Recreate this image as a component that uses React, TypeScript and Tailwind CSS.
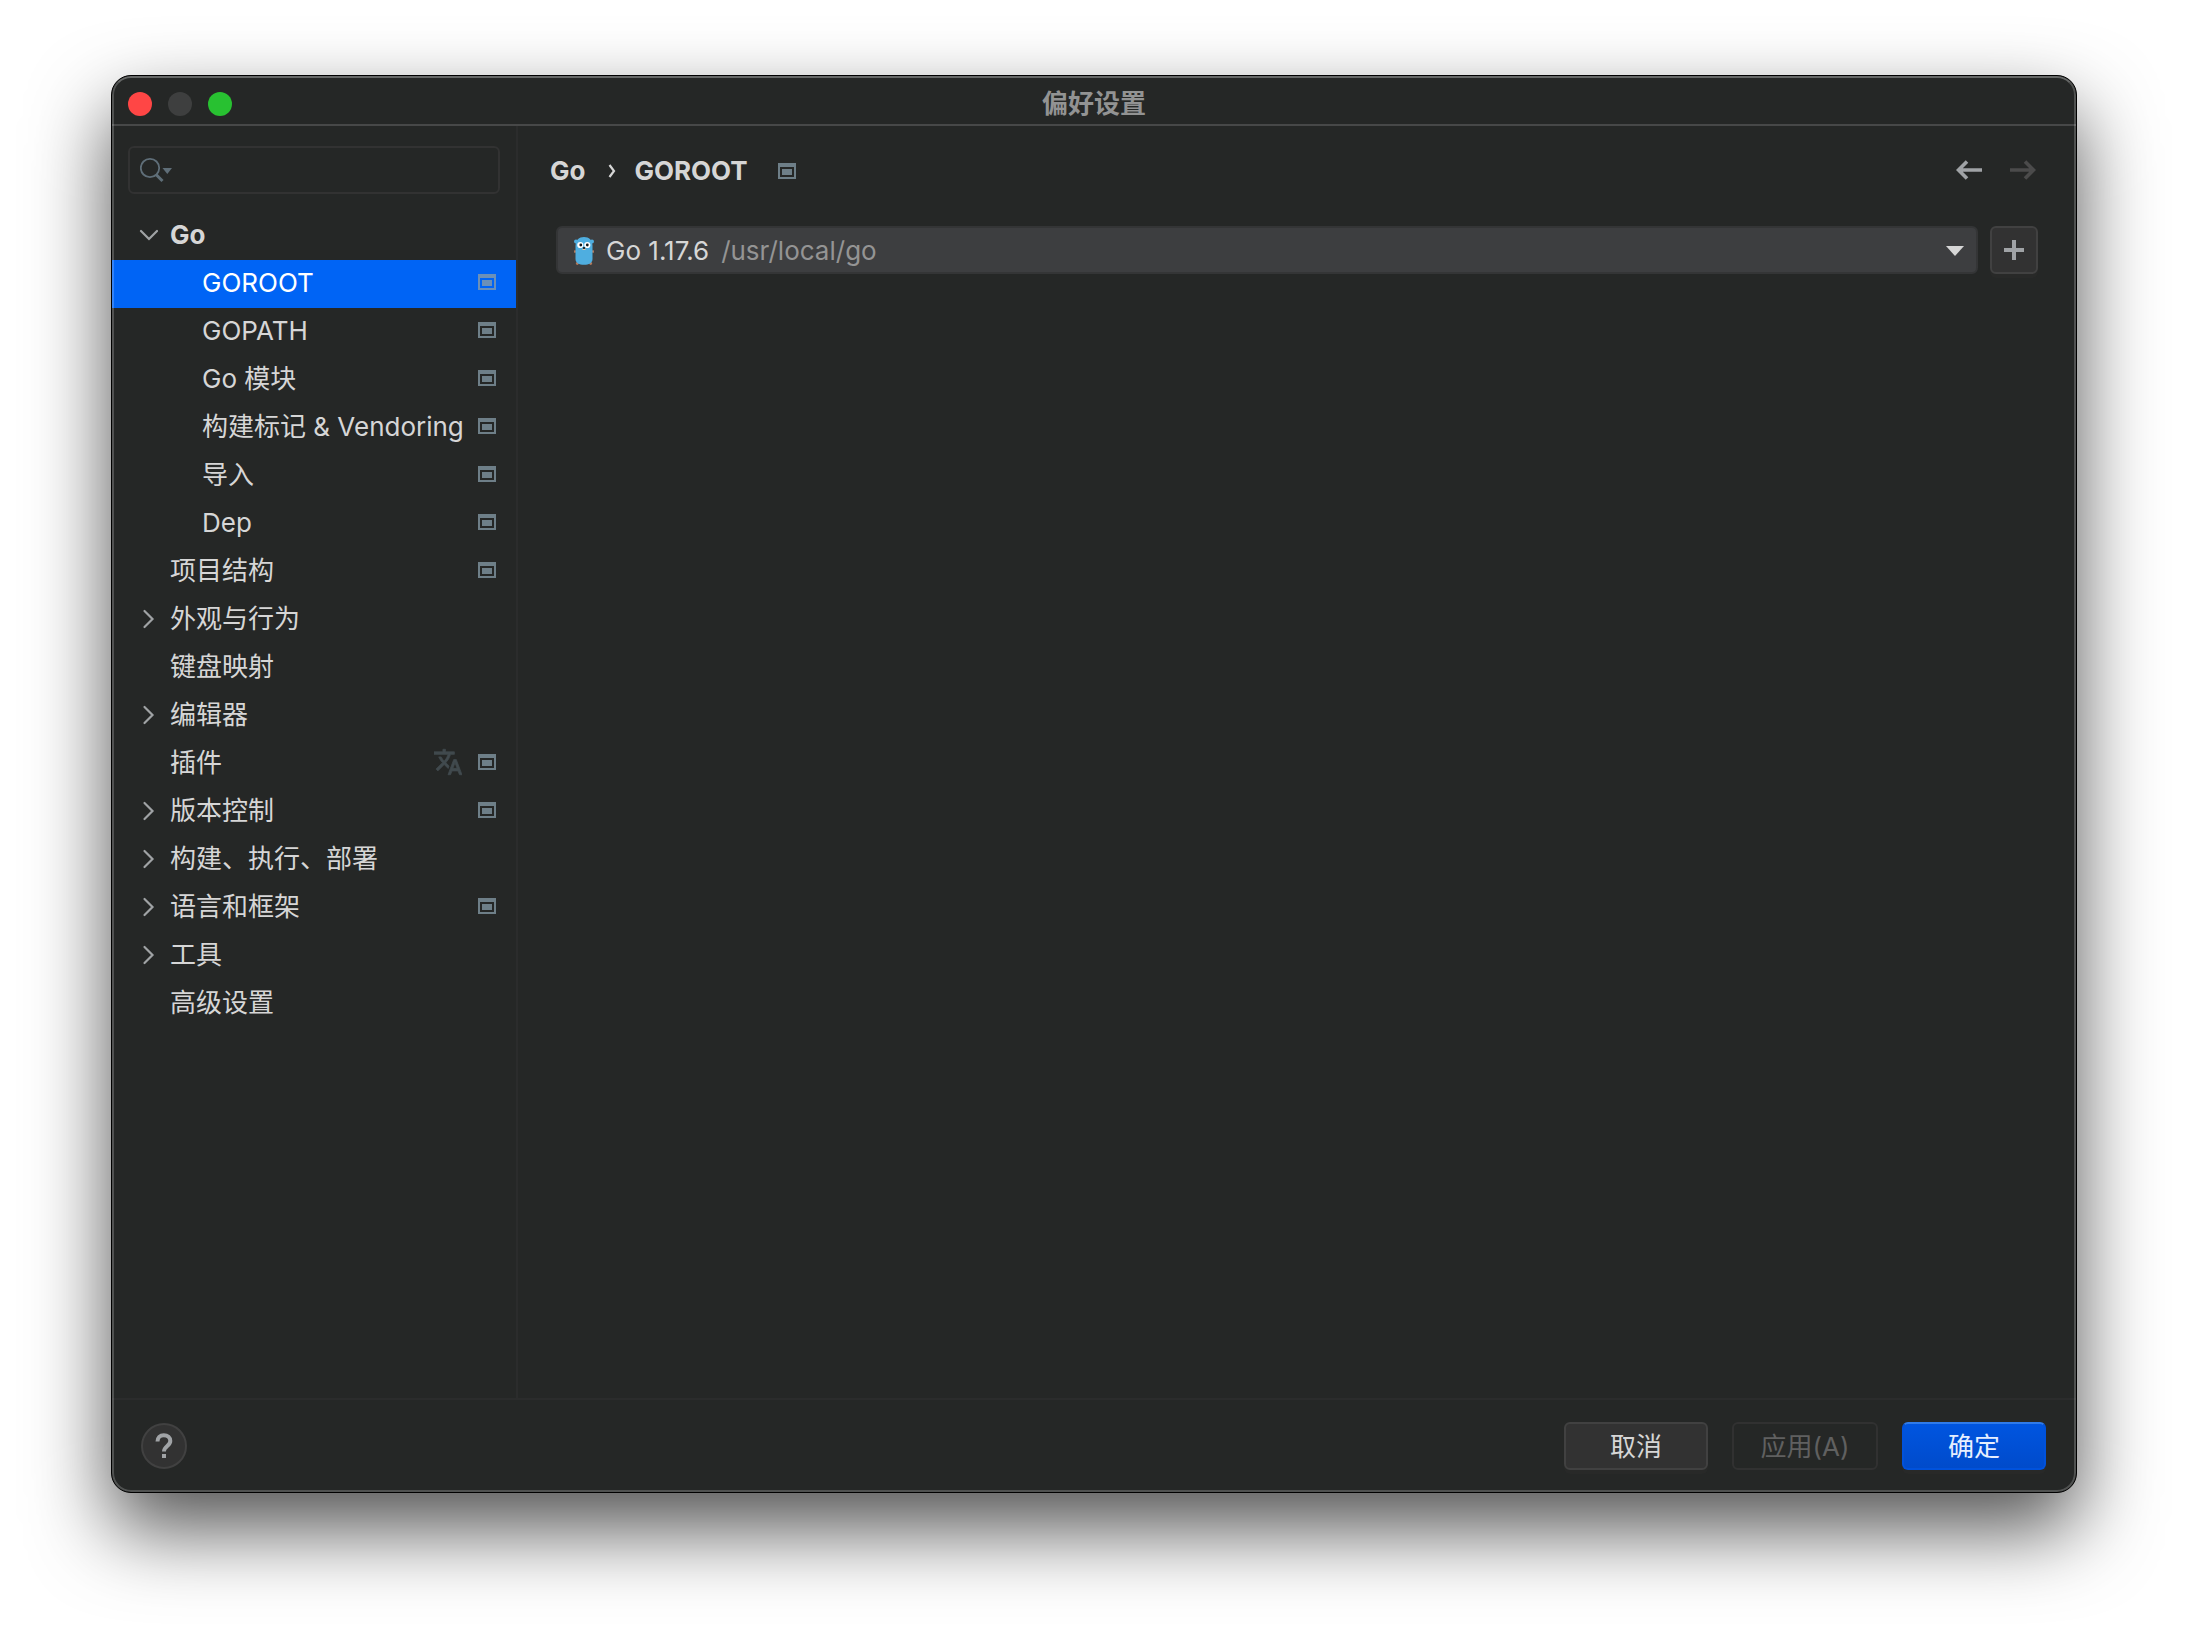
import { clsx } from 'clsx';

type TreeItem = {
  label: string;
  depth?: number;
  open?: boolean;
  expandable?: boolean;
  project?: boolean;
  translate?: boolean;
  selected?: boolean;
};

const TREE: TreeItem[] = [
  { label: 'Go', expandable: true, open: true },
  { label: 'GOROOT', depth: 1, project: true, selected: true },
  { label: 'GOPATH', depth: 1, project: true },
  { label: 'Go 模块', depth: 1, project: true },
  { label: '构建标记 & Vendoring', depth: 1, project: true },
  { label: '导入', depth: 1, project: true },
  { label: 'Dep', depth: 1, project: true },
  { label: '项目结构', project: true },
  { label: '外观与行为', expandable: true },
  { label: '键盘映射' },
  { label: '编辑器', expandable: true },
  { label: '插件', project: true, translate: true },
  { label: '版本控制', expandable: true, project: true },
  { label: '构建、执行、部署', expandable: true },
  { label: '语言和框架', expandable: true, project: true },
  { label: '工具', expandable: true },
  { label: '高级设置' },
];

function ProjectIcon({ className = 'text-[#6e7f88]' }: { className?: string }) {
  return (
    <svg width="18" height="16" viewBox="0 0 18 16" className={clsx('shrink-0', className)} fill="currentColor" aria-hidden="true">
      <path fillRule="evenodd" d="M0 0h18v16H0zM2 4v10h14V4z" />
      <path d="M4 6h10v6H4z" />
    </svg>
  );
}

function TranslateIcon() {
  return (
    <svg width="28" height="28" viewBox="1 1 22 22" className="shrink-0 text-[#414a4e]" fill="currentColor" stroke="currentColor" strokeWidth="0.600" aria-hidden="true">
      <path d="M12.87 15.07l-2.54-2.51.03-.03A17.52 17.52 0 0 0 14.07 6H17V4h-7V2H8v2H1v2h11.17C11.5 7.92 10.44 9.75 9 11.35 8.07 10.32 7.3 9.19 6.69 8h-2c.73 1.63 1.73 3.17 2.98 4.56l-5.09 5.02L4 19l5-5 3.11 3.11.76-2.04zM18.5 10h-2L12 22h2l1.12-3h4.75L21 22h2l-4.5-12zm-2.62 7l1.62-4.33L19.12 17h-3.24z" />
    </svg>
  );
}

function Chevron({ open }: { open?: boolean }) {
  return (
    <svg width="20" height="20" viewBox="0 0 20 20" className="text-[#a0a3a5]" fill="none" stroke="currentColor" strokeWidth="2.200" strokeLinecap="round" aria-hidden="true">
      <path d={open ? 'M3 6l8 8 8-8' : 'M6.500 2l8 8-8 8'} />
    </svg>
  );
}

function Gopher() {
  return (
    <svg width="20" height="28" viewBox="0 0 20 28" aria-hidden="true">
      <g fill="#b4795a">
        <circle cx="1" cy="14.500" r="1.300" />
        <circle cx="19" cy="14.500" r="1.300" />
        <circle cx="3.300" cy="26.500" r="1.400" />
        <circle cx="16.700" cy="26.500" r="1.400" />
      </g>
      <g fill="#4faee0">
        <circle cx="2" cy="4.500" r="2" />
        <circle cx="18" cy="4.500" r="2" />
        <path d="M1.500 9C1.500 3 5 0 10 0s8.500 3 8.500 9v13c0 4-3.500 5.800-8.500 5.800S1.500 26 1.500 22z" />
      </g>
      <circle cx="6.300" cy="8" r="3.100" fill="#fff" />
      <circle cx="13.300" cy="8" r="3.100" fill="#fff" />
      <circle cx="6.800" cy="8" r="1.400" fill="#16181a" />
      <circle cx="13.300" cy="8" r="1.400" fill="#16181a" />
      <path d="M8.500 11.500h3v1.500h-3z" fill="#e8c9a8" />
      <ellipse cx="10" cy="11" rx="1.300" ry="1" fill="#16181a" />
    </svg>
  );
}

function TreeRow({ item }: { item: TreeItem }) {
  return (
    <li>
      <button
        type="button"
        className={clsx(
          'flex h-12 w-full items-center pr-5 pb-0.5 text-left whitespace-nowrap',
          item.depth ? 'pl-[90px]' : 'pl-[26px]',
          item.selected ? 'bg-[#0064f5] text-white' : 'text-[#d6d6d6]',
          item.open && 'font-bold',
        )}
      >
        {!item.depth && (
          <span className="mr-3 flex w-5 justify-center">
            {item.expandable && <Chevron open={item.open} />}
          </span>
        )}
        <span className="flex-1">{item.label}</span>
        <span className="flex items-center gap-4 pb-0.5">
          {item.translate && <TranslateIcon />}
          {item.project && <ProjectIcon className={item.selected ? 'text-[#6b90b8]' : undefined} />}
        </span>
      </button>
    </li>
  );
}

function Sidebar() {
  return (
    <aside className="w-[406px] shrink-0 border-r-2 border-[#2b2c2c]">
      <label className="mx-4 mt-5 mb-[18px] flex h-12 items-center rounded-md border-2 border-[#323232] pl-2.5">
        <svg width="34" height="26" viewBox="1 0 34 26" className="shrink-0 text-[#5f6e78]" aria-hidden="true">
          <circle cx="11" cy="11" r="9.200" fill="none" stroke="currentColor" strokeWidth="1.800" />
          <path d="M17 17.500l6.500 6.500" stroke="currentColor" strokeWidth="3" />
          <path d="M23.500 11h9.500l-4.700 6z" fill="currentColor" />
        </svg>
        <input type="text" aria-label="搜索" className="min-w-0 flex-1 bg-transparent outline-none" />
      </label>
      <ul>
        {TREE.map((item) => (
          <TreeRow key={item.label} item={item} />
        ))}
      </ul>
    </aside>
  );
}

function Content() {
  return (
    <main className="min-w-0 flex-1 pr-[38px] pl-8">
      <div className="flex h-[90px] items-center font-bold">
        <span>Go</span>
        <svg width="8" height="16" viewBox="0 0 8 16" className="mr-[18px] ml-[23px]" fill="none" stroke="currentColor" strokeWidth="2.200" aria-hidden="true">
          <path d="M1.500 2l4.500 6-4.500 6" />
        </svg>
        <span>GOROOT</span>
        <ProjectIcon className="ml-[30px] text-[#6e7f88]" />
        <div className="ml-auto flex gap-6 pb-0.5">
          <button type="button" aria-label="后退" className="p-0.5 text-[#a0a3a6]">
            <svg width="26" height="20" viewBox="0 0 26 20" fill="none" stroke="currentColor" strokeWidth="3.600">
              <path d="M26 10H3M11 1.500L2.500 10l8.500 8.500" />
            </svg>
          </button>
          <button type="button" aria-label="前进" disabled className="p-0.5 text-[#4b4b4b]">
            <svg width="26" height="20" viewBox="0 0 26 20" fill="none" stroke="currentColor" strokeWidth="3.600">
              <path d="M0 10h23M15 1.500l8.500 8.500-8.500 8.500" />
            </svg>
          </button>
        </div>
      </div>
      <div className="mt-2.5 flex gap-3 pl-1.5">
        <button type="button" className="flex h-12 flex-1 items-center rounded-md border-2 border-[#343536] bg-[#3d3e40] pt-0.5 pr-3 pl-4">
          <Gopher />
          <span className="ml-3">Go 1.17.6</span>
          <span className="ml-3 text-[#949494]">/usr/local/go</span>
          <svg width="18" height="10" viewBox="0 0 18 10" className="ml-auto text-[#d6d6d6]" fill="currentColor" aria-hidden="true">
            <path d="M0 0h18L9 10z" />
          </svg>
        </button>
        <button type="button" aria-label="添加" className="flex size-12 items-center justify-center rounded-md border-2 border-[#414141] bg-[#323232] text-[#a0a3a6] shadow-[0_4px_0_#282928]">
          <svg width="20" height="20" viewBox="0 0 20 20" fill="currentColor">
            <path d="M8 0h4v8h8v4h-8v8H8v-8H0V8h8z" />
          </svg>
        </button>
      </div>
    </main>
  );
}

function Footer() {
  return (
    <footer className="flex h-[94px] items-center border-t-2 border-[#2b2c2c] pr-[30px] pl-[29px]">
      <button type="button" aria-label="帮助" className="flex size-[46px] items-center justify-center rounded-full border-2 border-[#414141] bg-[#323232] text-[#a0a3a6]">
        <svg width="18" height="26" viewBox="0 0 18 26" fill="none" stroke="currentColor" strokeWidth="4">
          <path d="M2.500 8.500C2.500 4.500 5 2.200 8.800 2.200s6.500 2.300 6.500 5.800c0 5-6.300 5-6.300 10.500" />
          <path d="M9 21v4" />
        </svg>
      </button>
      <div className="ml-auto flex gap-6">
        <button type="button" className="h-12 w-36 rounded-md border-2 border-[#414141] bg-[#323232] pt-0.5 shadow-[0_4px_0_#282928]">取消</button>
        <button type="button" disabled className="h-12 w-[146px] rounded-md border-2 border-[#313131] pt-0.5 text-[#606060]">应用(A)</button>
        <button type="button" className="h-12 w-36 rounded-md border-2 border-[#0052dc] border-t-[#2f7bea] bg-linear-to-b from-[#0055e0] to-[#004bcb] pt-0.5 text-[#e6efff] shadow-[0_4px_0_#282928]">确定</button>
      </div>
    </footer>
  );
}

export default function App() {
  return (
    <div className="flex min-h-screen bg-white px-[111px] pt-[75px] pb-[147px] font-[Inter,'Noto_Sans_CJK_SC',sans-serif] text-[26px] leading-9 text-[#d6d6d6]">
      <div className="relative flex flex-1 flex-col overflow-hidden rounded-[20px] border border-black bg-[#252726] shadow-[0_36px_80px_rgba(0,0,0,0.68)]">
        <header className="grid h-[50px] grid-cols-3 items-center border-b-2 border-[#474848] px-4 pt-2">
          <div className="flex gap-4">
            <button type="button" aria-label="关闭" className="size-6 rounded-full bg-[#ff4645]" />
            <button type="button" aria-label="最小化" disabled className="size-6 rounded-full bg-[#3e3f3f]" />
            <button type="button" aria-label="缩放" className="size-6 rounded-full bg-[#28c131]" />
          </div>
          <h1 className="text-center font-bold text-[#929393]">偏好设置</h1>
        </header>
        <div className="flex flex-1">
          <Sidebar />
          <Content />
        </div>
        <Footer />
        {/* Light rim drawn over the window edge */}
        <div className="pointer-events-none absolute inset-0 rounded-[19px] border-2 border-white/20 border-t-white/30" />
      </div>
    </div>
  );
}
